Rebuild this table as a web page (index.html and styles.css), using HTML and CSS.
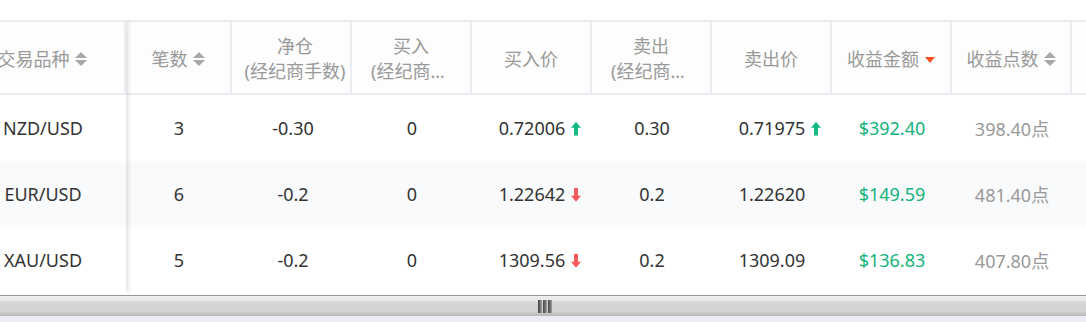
FILE: index.html
```html
<!DOCTYPE html>
<html lang="zh">
<head>
<meta charset="utf-8">
<title>收益表</title>
<link rel="stylesheet" href="styles.css">
</head>
<body>
<div class="page">
  <div class="table">
    <div class="fixed">
      <div class="th th-first"><span class="label">交易品种</span><span class="sort"><i class="up"></i><i class="down"></i></span></div>
      <div class="td td-first">NZD/USD</div>
      <div class="td td-first stripe">EUR/USD</div>
      <div class="td td-first">XAU/USD</div>
    </div>
    <div class="main">
      <div class="th"><span class="label">笔数</span><span class="sort"><i class="up"></i><i class="down"></i></span></div>
      <div class="th two shift"><span class="line">净仓</span><span class="line">(经纪商手数)</span></div>
      <div class="th two"><span class="line">买入</span><span class="line clip">(经纪商手数)</span></div>
      <div class="th"><span class="label">买入价</span></div>
      <div class="th two"><span class="line">卖出</span><span class="line clip">(经纪商手数)</span></div>
      <div class="th"><span class="label">卖出价</span></div>
      <div class="th"><span class="label">收益金额</span><span class="sort active"><i class="down"></i></span></div>
      <div class="th"><span class="label">收益点数</span><span class="sort"><i class="up"></i><i class="down"></i></span></div>
      <div class="th blank"></div>

      <div class="td">3</div>
      <div class="td shift">-0.30</div>
      <div class="td">0</div>
      <div class="td"><span class="num">0.72006<svg class="arrow up-arrow" viewBox="0 0 10 14" width="10" height="14"><path d="M5 0 L10 6 H7 V14 H3 V6 H0 Z"/></svg></span></div>
      <div class="td">0.30</div>
      <div class="td"><span class="num">0.71975<svg class="arrow up-arrow" viewBox="0 0 10 14" width="10" height="14"><path d="M5 0 L10 6 H7 V14 H3 V6 H0 Z"/></svg></span></div>
      <div class="td money">$392.40</div>
      <div class="td points">398.40点</div>
      <div class="td"></div>

      <div class="td stripe">6</div>
      <div class="td stripe shift">-0.2</div>
      <div class="td stripe">0</div>
      <div class="td stripe"><span class="num">1.22642<svg class="arrow down-arrow" viewBox="0 0 10 14" width="10" height="14"><path d="M5 14 L10 8 H7 V0 H3 V8 H0 Z"/></svg></span></div>
      <div class="td stripe">0.2</div>
      <div class="td stripe">1.22620</div>
      <div class="td stripe money">$149.59</div>
      <div class="td stripe points">481.40点</div>
      <div class="td stripe"></div>

      <div class="td">5</div>
      <div class="td shift">-0.2</div>
      <div class="td">0</div>
      <div class="td"><span class="num">1309.56<svg class="arrow down-arrow" viewBox="0 0 10 14" width="10" height="14"><path d="M5 14 L10 8 H7 V0 H3 V8 H0 Z"/></svg></span></div>
      <div class="td">0.2</div>
      <div class="td">1309.09</div>
      <div class="td money">$136.83</div>
      <div class="td points">407.80点</div>
      <div class="td"></div>
    </div>
  </div>
  <div class="scrollbar">
    <div class="grip"><i></i><i></i><i></i></div>
  </div>
  <div class="scroll-foot"></div>
</div>
</body>
</html>
```

FILE: styles.css
```css
* { box-sizing: border-box; }
html, body { margin: 0; padding: 0; background: #fff; }
body {
  font-family: "Noto Sans", "Noto Sans CJK SC", sans-serif;
  font-size: 18px;
  color: #333;
  overflow: hidden;
}
.page {
  width: 1086px;
  height: 322px;
  padding-top: 20px;
  display: flex;
  flex-direction: column;
}
.table {
  display: flex;
  height: 273px;
  overflow: hidden;
}
.fixed {
  width: 126px;
  flex: none;
  position: relative;
  z-index: 1;
  background: #fff;
  box-shadow: 2px 1px 5px rgba(0, 0, 0, 0.13);
  height: 272px;
}
.main {
  flex: 1;
  display: grid;
  grid-template-columns: 106px repeat(7, 120px) 1fr;
  grid-template-rows: 75px 66px 66px 66px;
  overflow: hidden;
}
.th {
  height: 75px;
  border-top: 2px solid #ebecf1;
  border-bottom: 2px solid #ebecf1;
  border-right: 2px solid #ebecf1;
  background: #fdfdfd;
  color: #999;
  display: flex;
  align-items: center;
  justify-content: center;
  white-space: nowrap;
  overflow: hidden;
  padding: 0 4px;
}
.th-first {
  padding: 0 40px 0 0;
}
.th.blank { border-right: none; }
.th.two {
  flex-direction: column;
  line-height: 25px;
  padding-top: 2px;
}
.th.shift { padding-left: 12px; }
.line { display: block; }
.line.clip {
  max-width: 80px;
  overflow: hidden;
  text-overflow: ellipsis;
  white-space: nowrap;
}
.sort {
  display: inline-flex;
  flex-direction: column;
  align-items: center;
  gap: 2px;
  margin-left: 5px;
  margin-top: 2px;
}
.sort i {
  display: block;
  width: 0;
  height: 0;
  border-left: 6px solid transparent;
  border-right: 6px solid transparent;
}
.sort .up { border-bottom: 6px solid #a8a8a8; }
.sort .down { border-top: 6px solid #a8a8a8; }
.sort.active { margin-left: 6px; margin-top: 4px; }
.sort.active .down {
  border-left-width: 5px;
  border-right-width: 5px;
  border-top: 6px solid #f4511e;
}
.td {
  height: 66px;
  display: flex;
  align-items: center;
  justify-content: center;
  white-space: nowrap;
  background: #fff;
}
.td-first {
  padding-right: 40px;
  overflow: hidden;
}
.td.shift { padding-left: 2px; }
.stripe { background: #f9fafc; }
.num {
  position: relative;
}
.arrow {
  position: absolute;
  left: calc(100% + 6px);
  top: 50%;
  transform: translateY(-45%);
}
.up-arrow { fill: #17bb7f; }
.down-arrow { fill: #f45b5b; }
.money { color: #13b27a; }
.points { color: #999; }
.scrollbar {
  margin-top: 2px;
  height: 21px;
  border-top: 1px solid #979797;
  background: linear-gradient(#f0f0f0 0, #e6e6e6 5px, #d5d5d5 6px, #d3d3d3 16px, #c6c6c6 17px, #b9b9b9 20px);
  display: flex;
  justify-content: center;
  align-items: center;
}
.grip {
  display: flex;
  gap: 1px;
  margin-left: 3px;
  margin-top: 1px;
}
.grip i {
  display: block;
  width: 4px;
  height: 13px;
  background: linear-gradient(90deg, #444 0, #6d6d6d 2px, #a0a0a0 4px);
}
.scroll-foot {
  flex: 1;
  background: #ececf2;
}
```
